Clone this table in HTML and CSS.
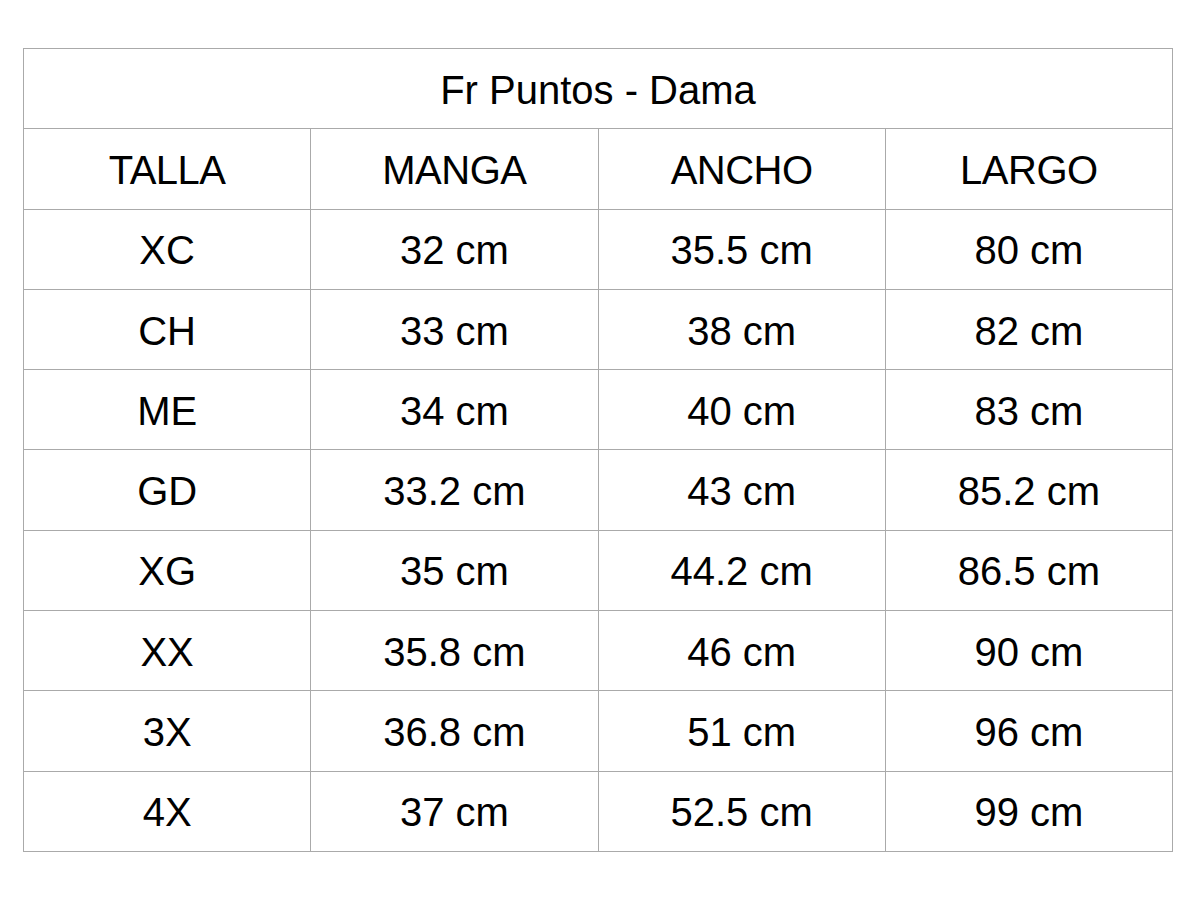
FILE: index.html
```html
<!DOCTYPE html>
<html lang="es">
<head>
<meta charset="utf-8">
<title>Fr Puntos - Dama</title>
<link rel="stylesheet" href="styles.css">
</head>
<body>
<div class="page">
<table class="sizes">
  <tr><th class="title" colspan="4">Fr Puntos - Dama</th></tr>
  <tr class="head"><td>TALLA</td><td>MANGA</td><td>ANCHO</td><td>LARGO</td></tr>
  <tr><td>XC</td><td>32 cm</td><td>35.5 cm</td><td>80 cm</td></tr>
  <tr><td>CH</td><td>33 cm</td><td>38 cm</td><td>82 cm</td></tr>
  <tr><td>ME</td><td>34 cm</td><td>40 cm</td><td>83 cm</td></tr>
  <tr><td>GD</td><td>33.2 cm</td><td>43 cm</td><td>85.2 cm</td></tr>
  <tr><td>XG</td><td>35 cm</td><td>44.2 cm</td><td>86.5 cm</td></tr>
  <tr><td>XX</td><td>35.8 cm</td><td>46 cm</td><td>90 cm</td></tr>
  <tr><td>3X</td><td>36.8 cm</td><td>51 cm</td><td>96 cm</td></tr>
  <tr><td>4X</td><td>37 cm</td><td>52.5 cm</td><td>99 cm</td></tr>
</table>
</div>
</body>
</html>
```
FILE: styles.css
```css
html, body {
  margin: 0;
  padding: 0;
  background: #ffffff;
}
.page {
  padding: 48px 0 0 23px;
}
.sizes {
  width: 1150px;
  border-collapse: collapse;
  table-layout: fixed;
  font-family: "Liberation Sans", Arial, sans-serif;
  font-size: 40px;
  color: #000;
}
.sizes tr {
  height: 80.3px;
}
.sizes th,
.sizes td {
  border: 1px solid #aaaaaa;
  text-align: center;
  vertical-align: middle;
  font-weight: normal;
  padding: 3px 0 0 0;
  width: 25%;
}
.sizes .head td {
  letter-spacing: -0.5px;
}
.sizes .title {
  width: auto;
}
```
